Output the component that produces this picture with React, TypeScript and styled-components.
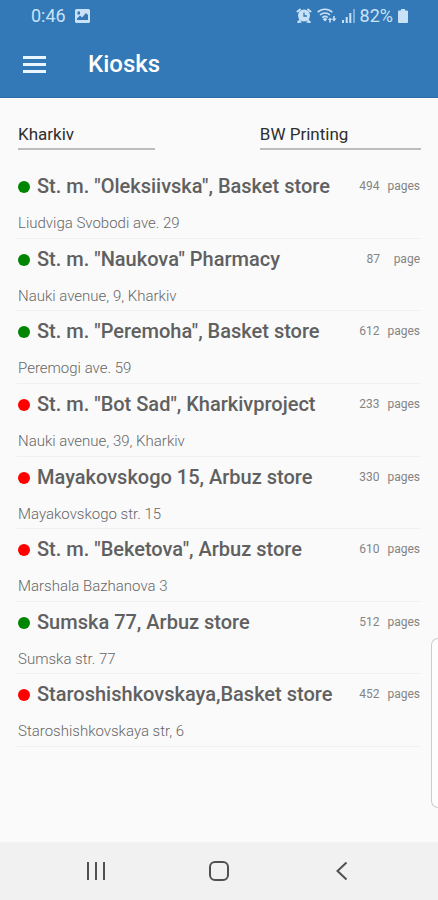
import React from "react";
import styled, { createGlobalStyle } from "styled-components";

const GlobalStyle = createGlobalStyle`
  * { box-sizing: border-box; }
  body {
    margin: 0;
    background: #fafafa;
    font-family: Roboto, "Liberation Sans", sans-serif;
  }
  button, select { font: inherit; color: inherit; }
`;

const Screen = styled.div`
  position: relative;
  display: flex;
  flex-direction: column;
  min-height: 100vh;
`;

const TopArea = styled.header`
  background: #3379b7;
  color: #fff;
  border-bottom: 1px solid #2c6ca8;
`;

const StatusBar = styled.div`
  display: flex;
  align-items: center;
  justify-content: space-between;
  height: 31px;
  padding: 0 30px 0 31px;
  color: #c9e2f8;
  font-size: 18px;
  line-height: 31px;
`;

const StatusGroup = styled.div<{ $gap: number }>`
  display: flex;
  align-items: center;
  gap: ${(p) => p.$gap}px;
`;

const Toolbar = styled.div`
  display: flex;
  align-items: center;
  gap: 36px;
  height: 66px;
  padding: 0 17px;
`;

const IconButton = styled.button`
  display: flex;
  align-items: center;
  justify-content: center;
  padding: 6px;
  border: 0;
  background: none;
  cursor: pointer;
`;

const Title = styled.h1`
  margin: 0;
  font-size: 24px;
  font-weight: 500;
  line-height: 32px;
`;

const Content = styled.main`
  flex: 1;
  padding: 20px 17px;
`;

const Filters = styled.form`
  display: flex;
  justify-content: space-between;
  margin-bottom: 16px;
  padding-left: 1px;
`;

const Picker = styled.select<{ $share: number }>`
  width: ${(p) => p.$share}%;
  height: 32px;
  padding: 2px 0 0;
  border: 0;
  border-bottom: 2px solid #bcbcbc;
  border-radius: 0;
  background: none;
  appearance: none;
  color: #2e2e2e;
  font-size: 17px;
`;

const KioskList = styled.ul`
  display: grid;
  grid-auto-rows: 1fr;
  min-height: 581px;
  margin: 0;
  padding: 0;
  list-style: none;
`;

const KioskRow = styled.li`
  display: flex;
  flex-direction: column;
  gap: 15px;
  padding-top: 8px;
  border-bottom: 1px solid #f0f0f0;
`;

const KioskHead = styled.div`
  display: flex;
  align-items: center;
`;

const StatusDot = styled.span<{ $online: boolean }>`
  flex: none;
  width: 12px;
  height: 12px;
  margin: 2px 7px 0 1px;
  border-radius: 50%;
  background: ${(p) => (p.$online ? "#008500" : "#ff0000")};
`;

const KioskName = styled.h2`
  flex: 1;
  margin: 0;
  color: #606060;
  font-size: 20px;
  font-weight: 500;
  line-height: 24px;
  white-space: nowrap;
`;

const PageCount = styled.span`
  display: flex;
  gap: 8px;
  padding-right: 1px;
  color: #848484;
  font-size: 12px;
  line-height: 24px;
`;

const Unit = styled.span`
  min-width: 32px;
  text-align: right;
`;

const Address = styled.p`
  margin: 0 1px;
  color: #666666;
  font-size: 15px;
  font-weight: 300;
  line-height: 20px;
`;

const EdgeHandle = styled.div`
  position: absolute;
  top: 638px;
  right: 0;
  width: 7px;
  height: 170px;
  border: 1px solid #cccccc;
  border-right: 0;
  border-radius: 7px 0 0 7px;
  background: #fdfdfd;
`;

const NavBar = styled.nav`
  display: flex;
  align-items: center;
  justify-content: space-between;
  height: 58px;
  padding: 0 79px;
  background: #f1f1f1;
  color: #505050;
`;

const PictureIcon = () => (
  <svg width="15" height="14" viewBox="0 0 15 14" aria-hidden="true">
    <path
      fill="currentColor"
      fillRule="evenodd"
      d="M1.5 0h12A1.5 1.5 0 0 1 15 1.5v11a1.5 1.5 0 0 1-1.500 1.500h-12A1.500 1.500 0 0 1 0 12.500v-11A1.500 1.500 0 0 1 1.500 0ZM2 11h11V6l-2-2-4 4.500-2-2-3 3ZM2.500 2.500v3h2.500v-3Z"
    />
  </svg>
);

const AlarmIcon = () => (
  <svg width="16" height="15" viewBox="0 0 16 15" aria-hidden="true">
    <g fill="none" stroke="currentColor" strokeLinecap="round">
      <path strokeWidth="2" d="M1.500 3.500 4 1.500M14.500 3.500 12 1.500M4 12 2.500 14M12 12l1.500 2" />
      <path strokeWidth="1.500" d="M2 14h3M11 14h3" />
    </g>
    <circle cx="8" cy="7.500" r="6" fill="currentColor" />
    <path fill="none" stroke="#3379b7" strokeWidth="1.300" d="M8 4.500v3.500h3" />
  </svg>
);

const WifiIcon = () => (
  <svg width="20" height="15" viewBox="0 0 20 15" aria-hidden="true">
    <g fill="none" stroke="currentColor" strokeWidth="1.600">
      <path d="M.7 4.200a10.500 10.500 0 0 1 14.600 0M3 7a7.200 7.200 0 0 1 10 0M5.300 9.600a4 4 0 0 1 5.400 0" />
    </g>
    <path fill="currentColor" d="m8 13.500-2.200-2.200a3 3 0 0 1 4.400 0ZM11 12l2-2.500 2 2.500h-1.200v2.500h-1.600V12ZM14.500 10.500h1.700V8h1.600v2.500h1.700L17 13.500Z" />
  </svg>
);

const SignalIcon = () => (
  <svg width="13" height="14" viewBox="0 0 13 14" aria-hidden="true">
    <path fill="currentColor" d="M0 11h2v3H0ZM3.700 8h2v6h-2ZM7.300 4h2v10h-2Z" />
    <path fill="currentColor" opacity=".5" d="M11 0h2v14h-2Z" />
  </svg>
);

const BatteryIcon = () => (
  <svg width="10" height="14" viewBox="0 0 10 14" aria-hidden="true">
    <path fill="currentColor" d="M3 0h4v1.500h2a1 1 0 0 1 1 1V13a1 1 0 0 1-1 1H1a1 1 0 0 1-1-1V2.500a1 1 0 0 1 1-1h2Z" />
  </svg>
);

const MenuIcon = () => (
  <svg width="23" height="17" viewBox="0 0 23 17" aria-hidden="true">
    <path fill="#e9f6ff" d="M0 0h23v3H0ZM0 7h23v3H0ZM0 14h23v3H0Z" />
  </svg>
);

const RecentsIcon = () => (
  <svg width="22" height="22" viewBox="0 0 22 22" aria-hidden="true">
    <path fill="none" stroke="currentColor" strokeWidth="2" d="M3 2v18M11 2v18M19 2v18" />
  </svg>
);

const HomeIcon = () => (
  <svg width="22" height="22" viewBox="0 0 22 22" aria-hidden="true">
    <rect x="2" y="2" width="18" height="18" rx="5" fill="none" stroke="currentColor" strokeWidth="2" />
  </svg>
);

const BackIcon = () => (
  <svg width="22" height="22" viewBox="0 0 22 22" aria-hidden="true">
    <path fill="none" stroke="currentColor" strokeWidth="2" d="m15.500 2.500-9 8.500 9 8.500" />
  </svg>
);

const kiosks = [
  { name: 'St. m. "Oleksiivska", Basket store', address: "Liudviga Svobodi ave. 29", pages: 494, unit: "pages", online: true },
  { name: 'St. m. "Naukova" Pharmacy', address: "Nauki avenue, 9, Kharkiv", pages: 87, unit: "page", online: true },
  { name: 'St. m. "Peremoha", Basket store', address: "Peremogi ave. 59", pages: 612, unit: "pages", online: true },
  { name: 'St. m. "Bot Sad", Kharkivproject', address: "Nauki avenue, 39, Kharkiv", pages: 233, unit: "pages", online: false },
  { name: "Mayakovskogo 15, Arbuz store", address: "Mayakovskogo str. 15", pages: 330, unit: "pages", online: false },
  { name: 'St. m. "Beketova", Arbuz store', address: "Marshala Bazhanova 3", pages: 610, unit: "pages", online: false },
  { name: "Sumska 77, Arbuz store", address: "Sumska str. 77", pages: 512, unit: "pages", online: true },
  { name: "Staroshishkovskaya,Basket store", address: "Staroshishkovskaya str, 6", pages: 452, unit: "pages", online: false },
];

export default function App() {
  return (
    <Screen>
      <GlobalStyle />
      <TopArea>
        <StatusBar>
          <StatusGroup $gap={9}>
            <span>0:46</span>
            <PictureIcon />
          </StatusGroup>
          <StatusGroup $gap={5}>
            <AlarmIcon />
            <WifiIcon />
            <SignalIcon />
            <span>82%</span>
            <BatteryIcon />
          </StatusGroup>
        </StatusBar>
        <Toolbar>
          <IconButton type="button" aria-label="Open menu">
            <MenuIcon />
          </IconButton>
          <Title>Kiosks</Title>
        </Toolbar>
      </TopArea>
      <Content>
        <Filters>
          <Picker $share={34} aria-label="City" defaultValue="Kharkiv">
            <option>Kharkiv</option>
          </Picker>
          <Picker $share={40} aria-label="Service" defaultValue="BW Printing">
            <option>BW Printing</option>
          </Picker>
        </Filters>
        <KioskList>
          {kiosks.map((kiosk) => (
            <KioskRow key={kiosk.name}>
              <KioskHead>
                <StatusDot $online={kiosk.online} />
                <KioskName>{kiosk.name}</KioskName>
                <PageCount>
                  <span>{kiosk.pages}</span>
                  <Unit>{kiosk.unit}</Unit>
                </PageCount>
              </KioskHead>
              <Address>{kiosk.address}</Address>
            </KioskRow>
          ))}
        </KioskList>
      </Content>
      <EdgeHandle />
      <NavBar aria-label="System">
        <IconButton type="button" aria-label="Recent apps">
          <RecentsIcon />
        </IconButton>
        <IconButton type="button" aria-label="Home">
          <HomeIcon />
        </IconButton>
        <IconButton type="button" aria-label="Back">
          <BackIcon />
        </IconButton>
      </NavBar>
    </Screen>
  );
}
